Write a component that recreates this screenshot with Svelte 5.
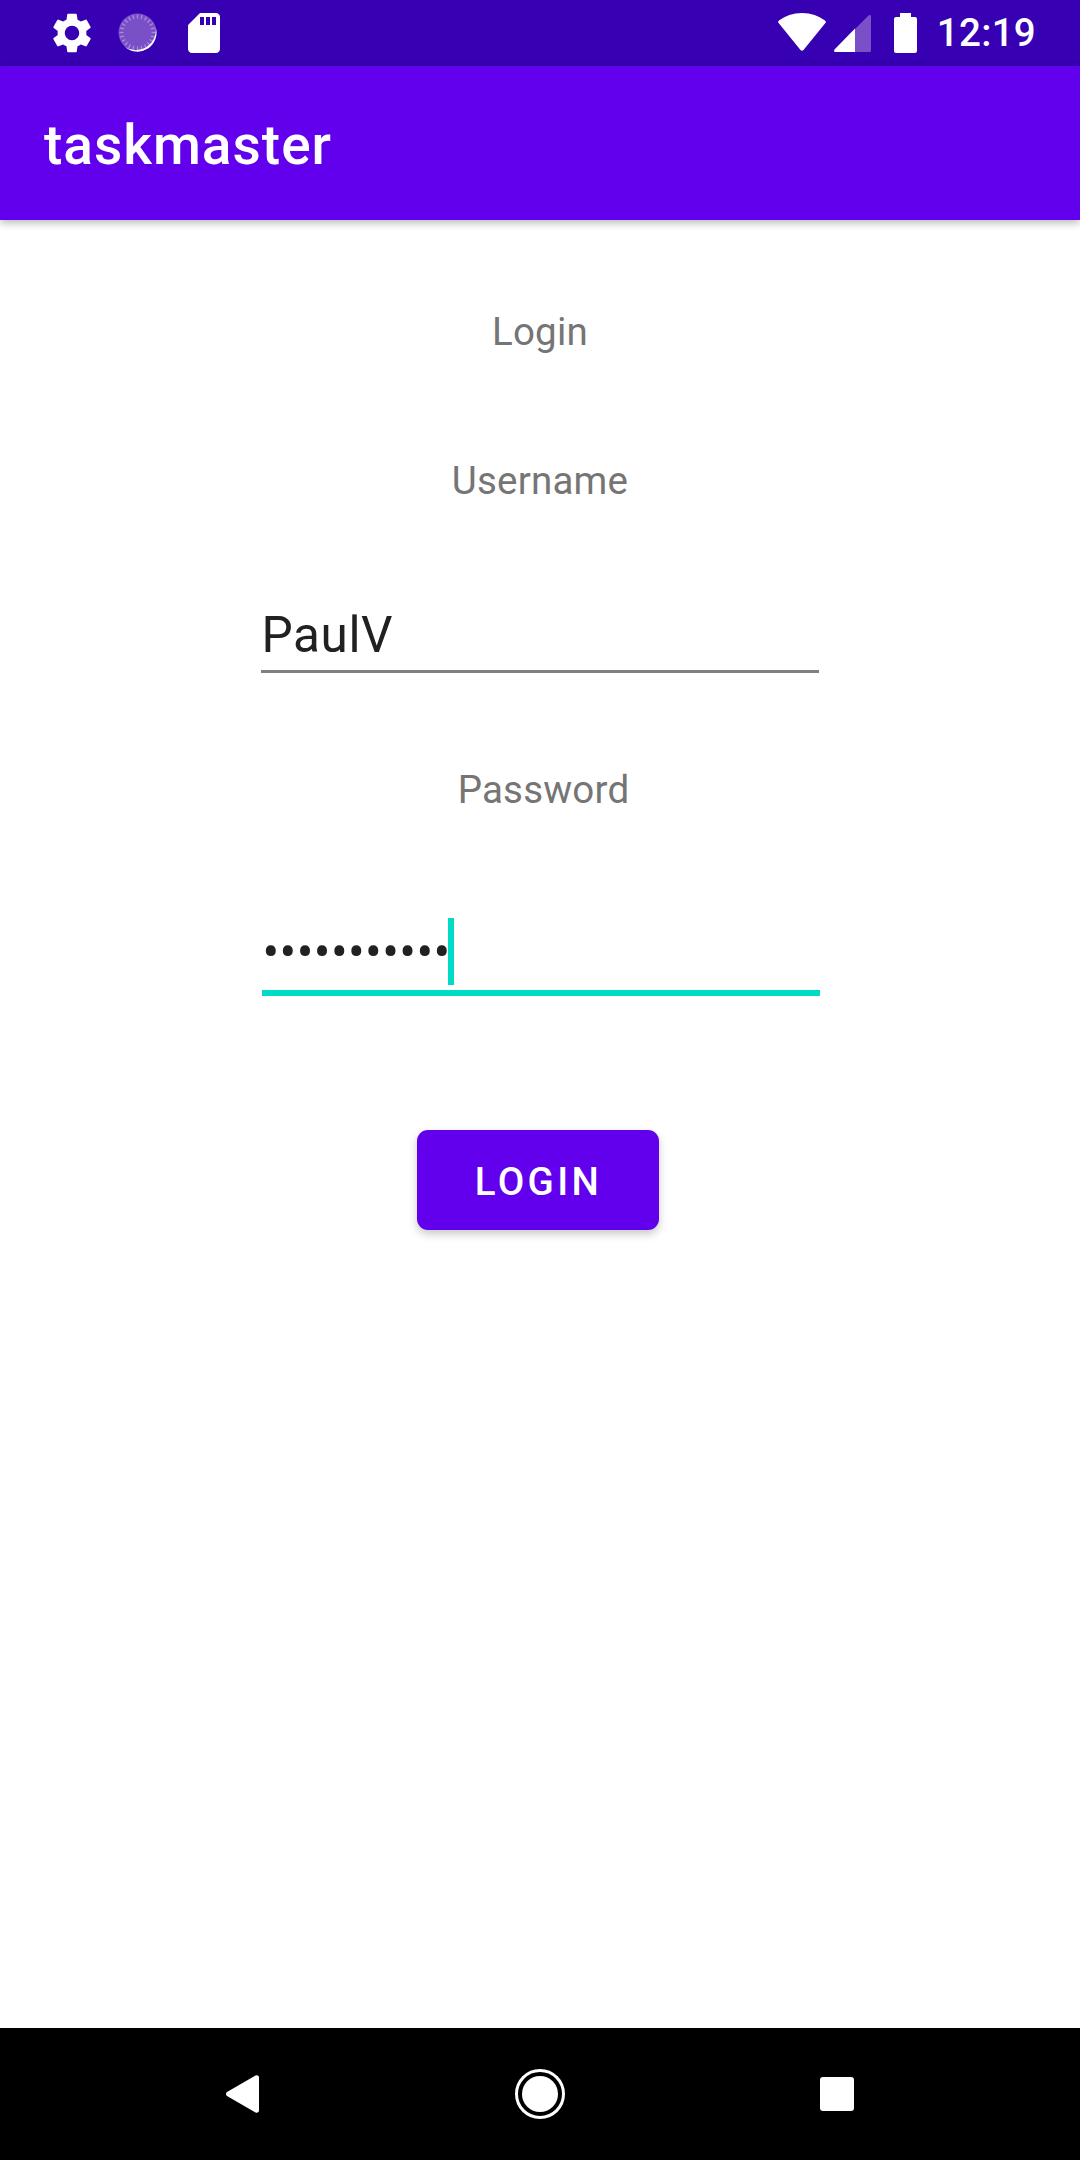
<script>
  const ticks = Array.from({ length: 24 }, (_, i) => i * 15);
</script>

<div class="screen">
  <header class="status">
    <div class="status-left">
      <svg class="gear" viewBox="0 0 24 24" aria-hidden="true"><path fill="#fff" d="M19.14 12.94c.04-.3.06-.61.06-.94 0-.32-.02-.64-.07-.94l2.03-1.58c.18-.14.23-.41.12-.61l-1.92-3.32c-.12-.22-.37-.29-.59-.22l-2.39.96c-.5-.38-1.03-.7-1.62-.94l-.36-2.54c-.04-.24-.24-.41-.48-.41h-3.84c-.24 0-.43.17-.47.41l-.36 2.54c-.59.24-1.13.57-1.62.94l-2.39-.96c-.22-.08-.47 0-.59.22L2.74 8.87c-.12.21-.08.47.12.61l2.03 1.58c-.05.3-.09.63-.09.94s.02.64.07.94l-2.03 1.58c-.18.14-.23.41-.12.61l1.92 3.32c.12.22.37.29.59.22l2.39-.96c.5.38 1.03.7 1.62.94l.36 2.54c.05.24.24.41.48.41h3.84c.24 0 .44-.17.47-.41l.36-2.54c.59-.24 1.13-.56 1.62-.94l2.39.96c.22.08.47 0 .59-.22l1.92-3.32c.12-.22.07-.47-.12-.61l-2.01-1.58zM12 15.6c-1.98 0-3.6-1.62-3.6-3.6s1.62-3.6 3.6-3.6 3.6 1.62 3.6 3.6-1.62 3.6-3.6 3.6z"/></svg>
      <svg class="spinner" viewBox="0 0 40 40" aria-hidden="true">
        <circle cx="19.5" cy="19.5" r="19" fill="#7a4fc8"/>
        {#each ticks as a}
          <line x1="19.5" y1="1.500" x2="19.5" y2="5.500" stroke="#a98ddd" stroke-width="1.2" transform="rotate({a} 19.5 19.5)"/>
        {/each}
        <path fill="#fff" d="M7 34 A19 19 0 0 0 37.600 14 A20 20 0 0 1 7 34z"/>
      </svg>
      <svg class="sd" viewBox="4 2 16 20" aria-hidden="true"><path fill="#fff" d="M18 2h-8L4.02 8 4 20c0 1.1.9 2 2 2h12c1.1 0 2-.9 2-2V4c0-1.1-.9-2-2-2zm-6 6h-2V4h2v4zm3 0h-2V4h2v4zm3 0h-2V4h2v4z"/></svg>
    </div>
    <div class="status-right">
      <svg class="wifi" viewBox="0 0 48 38" aria-hidden="true"><path fill="#fff" d="M24 0C15 0 7 3 1 7.5c-1 .8-1.2 1.6-.4 2.6L22.3 36.8c.9 1.2 2.5 1.2 3.4 0L47.4 10.1c.8-1 .6-1.800-.4-2.600C41 3 33 0 24 0z"/></svg>
      <svg class="signal" viewBox="0 0 37 37" aria-hidden="true">
        <path fill="#7a4fc8" d="M21 14 34.500.6C35.500-.4 37 .2 37 1.600V35.500c0 .9-.6 1.500-1.500 1.500H21z"/>
        <path fill="#fff" d="M21 13.500V37H1.500C.2 37-.4 35.600.5 34.600z"/>
      </svg>
      <svg class="battery" viewBox="0 0 23 40" aria-hidden="true"><path fill="#fff" d="M6 0h11v4h4c1.100 0 2 .9 2 2v32c0 1.100-.9 2-2 2H2c-1.100 0-2-.9-2-2V6c0-1.100.9-2 2-2h4z"/></svg>
      <span class="time">12:19</span>
    </div>
  </header>

  <div class="appbar"><h1>taskmaster</h1></div>

  <main class="form">
    <p class="label login-label">Login</p>
    <p class="label username-label">Username</p>
    <div class="field username">PaulV</div>
    <p class="label password-label">Password</p>
    <div class="field password">
      <span class="dots">•••••••••••</span>
      <span class="caret"></span>
    </div>
    <button class="submit" type="button">Login</button>
  </main>

  <nav class="nav">
    <svg class="back" viewBox="0 0 33 38" aria-hidden="true"><path fill="#fff" d="M1 17 29.500.6C31 -.3 33 .6 33 2.400v33.200c0 1.800-2 2.700-3.500 1.800L1 21c-1.300-.8-1.300-3.200 0-4z"/></svg>
    <svg class="home" viewBox="0 0 50 50" aria-hidden="true"><circle cx="25" cy="25" r="23.500" fill="none" stroke="#fff" stroke-width="3"/><circle cx="25" cy="25" r="18" fill="#fff"/></svg>
    <span class="recent"></span>
  </nav>
</div>

<style>
  :global(body) { margin: 0; background: #fff; }
  .screen {
    width: 1080px; height: 2160px; display: flex; flex-direction: column;
    background: #fff; font-family: Roboto, "Noto Sans", sans-serif; overflow: hidden;
  }
  .status {
    height: 66px; flex: none; background: #3700b3; display: flex;
    justify-content: space-between; align-items: flex-start; box-sizing: border-box;
  }
  .status-left { display: flex; align-items: flex-start; }
  .status-left svg, .status-right svg { display: block; flex: none; }
  .gear { width: 48px; height: 48px; margin: 9px 0 0 48px; }
  .spinner { width: 40px; height: 40px; margin: 13px 0 0 22px; }
  .sd { width: 32px; height: 40px; margin: 13px 0 0 30px; }
  .status-right { display: flex; align-items: flex-start; padding-right: 44px; }
  .wifi { width: 48px; height: 38px; margin-top: 13px; }
  .signal { width: 37px; height: 37px; margin: 15px 0 0 8px; }
  .battery { width: 23px; height: 40px; margin: 13px 0 0 23px; }
  .time {
    margin-left: 20px; color: #fff; font-size: 38.5px; font-weight: 500;
    line-height: 66px; letter-spacing: 0.3px;
  }
  .appbar {
    height: 154px; flex: none; background: #6200ee; display: flex; align-items: center;
    padding-left: 44px; box-sizing: border-box; position: relative;
    box-shadow: 0 3px 8px rgba(0, 0, 0, 0.28);
  }
  h1 { margin: 3px 0 0; color: #fff; font-size: 55px; font-weight: 500; line-height: 64px; letter-spacing: 1px; }
  .form { flex: 1; display: flex; flex-direction: column; align-items: center; min-height: 0; }
  .label {
    margin: 0; color: #757575; font-size: 38.5px; line-height: 44px; text-align: center;
    letter-spacing: 0.2px;
  }
  .login-label { margin-top: 90px; }
  .username-label { margin-top: 105px; }
  .password-label { margin-top: 95px; padding-left: 7px; }
  .field { width: 558px; box-sizing: border-box; color: #212121; }
  .username {
    margin-top: 102px; height: 68px; line-height: 60px; font-size: 49.500px;
    border-bottom: 3px solid #808080; padding-left: 1px; margin-left: -1px; letter-spacing: 0.6px;
  }
  .password {
    margin-top: 106px; margin-left: 1px; height: 78px; display: flex; align-items: flex-start;
    border-bottom: 6px solid #00dbc6; padding-left: 1px;
  }
  .dots { font-size: 49.500px; line-height: 68px; letter-spacing: 0.4px; }
  .caret { width: 6px; height: 67px; background: #00dbc6; margin-left: -3px; }
  .submit {
    margin-top: 134px; margin-left: -5px; width: 242px; height: 100px; border: 0; border-radius: 11px;
    background: #6200ee; color: #fff; font: 500 38.5px Roboto, sans-serif;
    letter-spacing: 3.44px; text-transform: uppercase; padding: 3px 0 0 2px;
    box-shadow: 0 4px 8px rgba(0, 0, 0, 0.22);
  }
  .nav {
    height: 132px; flex: none; background: #000; display: flex; align-items: flex-start; position: relative;
  }
  .back { width: 33px; height: 38px; margin: 47px 0 0 226px; display: block; }
  .home { width: 50px; height: 50px; margin: 41px 0 0 256px; display: block; }
  .recent { width: 34px; height: 34px; margin: 49px 0 0 255px; background: #fff; border-radius: 3px; display: block; }
</style>
